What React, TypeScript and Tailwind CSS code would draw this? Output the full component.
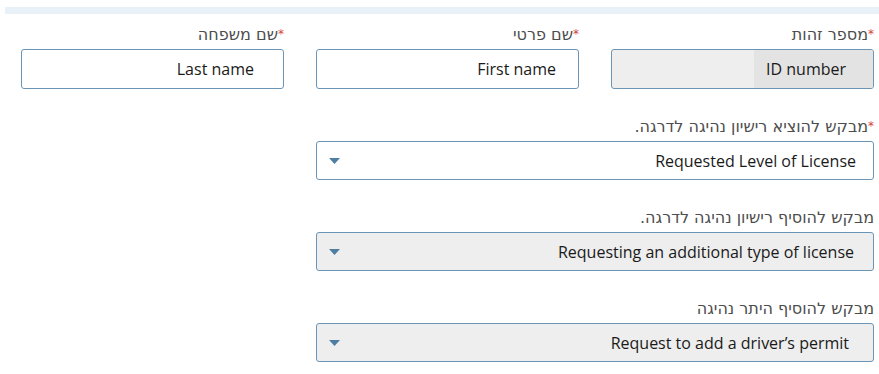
import React from 'react';

const font = { fontFamily: '"Open Sans", "Noto Sans", "Liberation Sans", sans-serif' };
const labelFont = { fontFamily: '"DejaVu Sans", "Liberation Sans", sans-serif' };

function Label({ text, required }: { text: string; required?: boolean }) {
  return (
    <div className="h-[24px] pb-[5px] text-[16px] leading-[19px] text-[#4d4d4d] whitespace-nowrap" style={labelFont}>
      {required && <span className="text-[12px] align-top text-[#d43f3a]">*</span>}
      {text}
    </div>
  );
}

function TextBox({ label, value, pad, grey }: { label: string; value: string; pad: string; grey?: boolean }) {
  return (
    <div>
      <Label text={label} required />
      <div
        className={`h-[40px] flex items-stretch rounded-[3px] border border-[#6b95b6] overflow-hidden ${
          grey ? 'bg-[#eeeeee]' : 'bg-white'
        }`}
      >
        {grey ? (
          <span className={`flex items-center bg-[#e3e3e3] pl-[12px] text-[16px] text-[#1a1a1a] ${pad}`}>{value}</span>
        ) : (
          <span className={`flex items-center text-[16px] text-[#1a1a1a] ${pad}`}>{value}</span>
        )}
      </div>
    </div>
  );
}

function SelectBox({
  label,
  value,
  pad,
  required,
  grey,
}: {
  label: string;
  value: string;
  pad: string;
  required?: boolean;
  grey?: boolean;
}) {
  return (
    <div className="col-span-2">
      <Label text={label} required={required} />
      <div
        className={`h-[39px] flex items-center justify-between rounded-[3px] border border-[#6b95b6] pl-[12px] ${pad} ${
          grey ? 'bg-[#eeeeee]' : 'bg-white'
        }`}
      >
        <span className="text-[16px] text-[#1a1a1a]">{value}</span>
        <svg width="11" height="6" viewBox="0 0 11 6">
          <path d="M0 0 L11 0 L5.5 6 Z" fill="#4f7ea3" />
        </svg>
      </div>
    </div>
  );
}

export default function App() {
  return (
    <div className="w-[879px] h-[374px] bg-white overflow-hidden" style={font}>
      <div className="mt-[7px] ml-[5px] h-[7px] bg-[#e8f1f8]" />
      <div dir="rtl" className="mt-[11px] ml-[21px] w-[853px] grid grid-cols-3 gap-x-[32px] gap-y-[28px]">
        <TextBox label="מספר זהות" value="ID number" pad="pr-[27px]" grey />
        <TextBox label="שם פרטי" value="First name" pad="pr-[22px]" />
        <TextBox label="שם משפחה" value="Last name" pad="pr-[29px]" />

        <SelectBox label="מבקש להוציא רישיון נהיגה לדרגה." value="Requested Level of License" pad="pr-[17px]" required />
        <div />

        <SelectBox label="מבקש להוסיף רישיון נהיגה לדרגה." value="Requesting an additional type of license" pad="pr-[19px]" grey />
        <div />

        <SelectBox label="מבקש להוסיף היתר נהיגה" value="Request to add a driver’s permit" pad="pr-[24px]" grey />
        <div />
      </div>
    </div>
  );
}
